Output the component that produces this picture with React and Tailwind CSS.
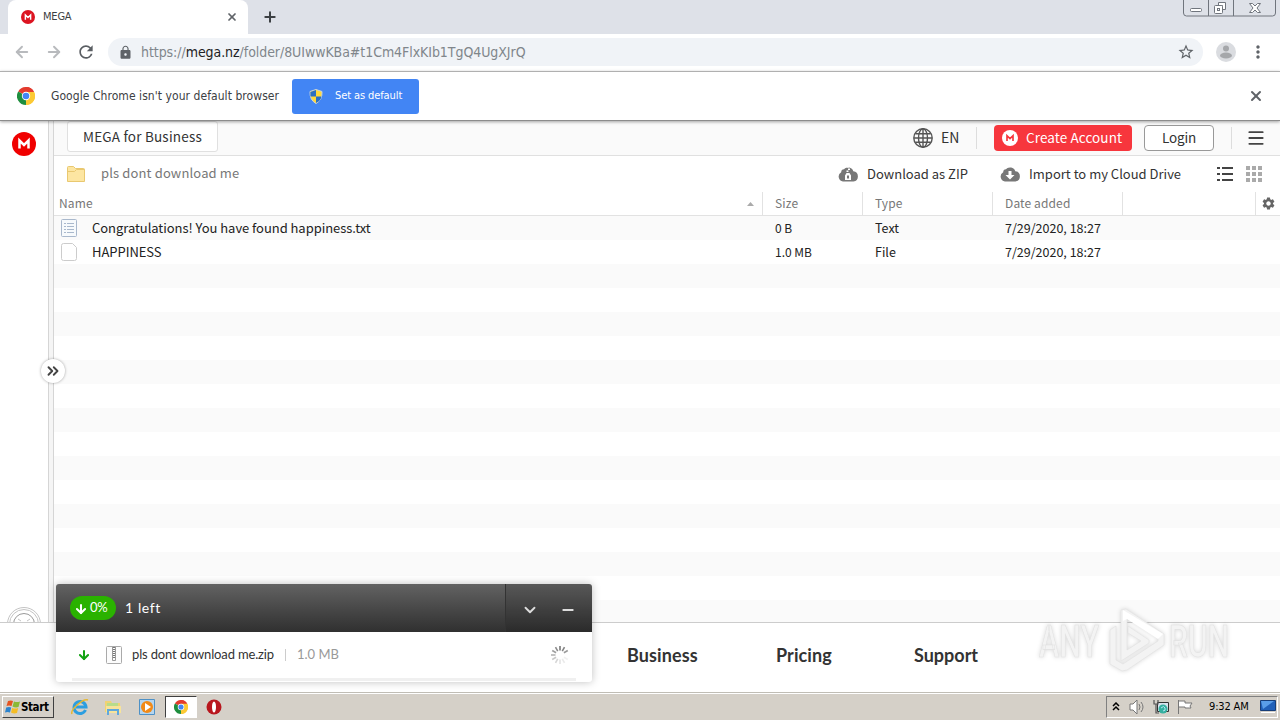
import React from 'react'
import { ArrowDown, ArrowLeft, ArrowRight, ChevronDown, ChevronsRight, Menu, Minus, Plus, X } from 'lucide-react'
import { MdLock, MdMoreVert, MdRefresh, MdSettings, MdStarBorder } from 'react-icons/md'

const files = [
  { name: 'Congratulations! You have found happiness.txt', size: '0 B', type: 'Text', date: '7/29/2020, 18:27' },
  { name: 'HAPPINESS', size: '1.0 MB', type: 'File', date: '7/29/2020, 18:27' },
]

const MegaLogo = ({ className, bg = '#f00000', fg = '#ffffff' }) => (
  <svg className={className} viewBox="0 0 24 24">
    <circle cx="12" cy="12" r="12" fill={bg} />
    <path d="M7.500 16.500v-8l4.500 4.500 4.500-4.500v8" fill="none" stroke={fg} strokeWidth="2.500" />
  </svg>
)

const ChromeLogo = ({ className }) => (
  <svg className={className} viewBox="0 0 24 24">
    <path d="M12 12 1.600 6A12 12 0 0 1 22.400 6Z" fill="#e33b2e" />
    <path d="M12 12 22.400 6A12 12 0 0 1 12 24Z" fill="#fcc934" />
    <path d="M12 12v12A12 12 0 0 1 1.600 6Z" fill="#1e8e3e" />
    <path d="M12 6.500h10.700A12 12 0 0 0 12 0Z" fill="#e33b2e" />
    <path d="M12 6.500h10.700A12 12 0 0 1 12 24l4.800-9.200Z" fill="#fcc934" />
    <circle cx="12" cy="12" r="5.600" fill="#fff" />
    <circle cx="12" cy="12" r="4.400" fill="#4285f4" />
  </svg>
)

const Shield = () => (
  <svg className="h-[15px] w-[14px]" viewBox="0 0 14 15">
    <path d="M7 0.500 13 2.500Q13.500 11 7 14.500 0.500 11 1 2.500Z" fill="#ffd93b" stroke="#c9d4dc" />
    <path d="M7 1v6.500H1.500L1.400 3Z" fill="#2b6fc2" />
    <path d="M7 7.500h5.500Q11.500 12 7 14Z" fill="#2b6fc2" />
  </svg>
)

const WindowButtons = () => (
  <svg className="h-[18px] w-[96px]" viewBox="0 0 96 18" fill="none" stroke="#70757d">
    <path d="M2.500 0v13q0 3 3 3h86q3 0 3-3V0M27.500 0v16M52.500 0v16" />
    <rect x="9.500" y="8.500" width="11" height="3" rx="1" fill="#fff" />
    <path d="M37.500 2.500h7v7h-3v-4h-4z" fill="#fff" />
    <rect x="33.500" y="5.500" width="8" height="8" rx="1" fill="#fff" />
    <rect x="36.500" y="8.500" width="2" height="2" />
    <path d="M68.500 3.500h3l2.500 2.500 2.500-2.500h3l-3.500 4.500 3.500 4.500h-3l-2.500-2.500-2.500 2.500h-3l3.500-4.500z" fill="#fff" />
  </svg>
)

const Globe = () => (
  <svg className="h-5 w-5" viewBox="0 0 20 20" fill="none" stroke="#555" strokeWidth="1.400">
    <circle cx="10" cy="10" r="9.200" />
    <ellipse cx="10" cy="10" rx="4.500" ry="9.200" />
    <path d="M10 1v18M1 10h18M2.500 5.800h15M2.500 14.200h15" />
  </svg>
)

const CloudIcon = ({ zip }) => (
  <svg className="h-4 w-5" viewBox="0 0 20 16">
    <path d="M5 15.500A5 5 0 0 1 3.200 6.200 3 3 0 0 1 6 3.200 5.500 5.500 0 0 1 15.300 5.200a5.200 5.200 0 0 1 .2 10.300z" fill="#777" />
    {zip ? (
      <g>
        <path d="M9 0h2v1.500H9zM10 2.500h2V4h-2zM8.500 4.500h2V6h-2z" fill="#fff" />
        <path d="M7 14V9.500L8.500 7h3L13 9.500V14zM9 9.500v3h2v-3z" fill="#fff" fillRule="evenodd" />
      </g>
    ) : (
      <path d="M8.500 5h3v4h3L10 13.500 5.500 9h3z" fill="#fff" />
    )}
  </svg>
)

const Folder = () => (
  <svg className="h-[18px] w-5" viewBox="0 0 20 18">
    <path d="M1.500 16.500v-14q0-1 1-1h5l2 2h8q1 0 1 1v12z" fill="#fde6a2" stroke="#e9c870" />
    <path d="M1.500 6.500h7l2-2h8" fill="none" stroke="#e9c870" />
  </svg>
)

const FileIcon = ({ type }) => (
  <svg className="h-[18px] w-4" viewBox="0 0 16 18" fill="none">
    {type === 'Text' ? (
      <g stroke="#a9b8cc">
        <rect x="0.500" y="0.500" width="15" height="17" rx="1" fill="#f7fafc" />
        <path d="M3 4.500h2M6 4.500h7M3 7.500h2M6 7.500h7M3 10.500h2M6 10.500h7M3 13.500h2M6 13.500h7" />
      </g>
    ) : (
      <path d="M2.500.5h9l4 4v11q0 2-2 2h-11q-2 0-2-2v-13q0-2 2-2z" fill="#fff" stroke="#ccc" />
    )}
  </svg>
)

const ZipIcon = () => (
  <svg className="h-[18px] w-4" viewBox="0 0 16 18" fill="none" stroke="#aaa">
    <rect x="0.500" y="0.500" width="15" height="17" rx="1" fill="#fcfcfc" />
    <path d="M6.500 1v13.500h3V1" stroke="#999" />
    <path d="M8 1v12" stroke="#777" strokeDasharray="1 1" strokeWidth="2" />
  </svg>
)

const Spinner = () => (
  <svg className="h-5 w-5" viewBox="0 0 20 20">
    {[1, 0.9, 0.75, 0, 0.1, 0.15, 0.2, 0.3, 0.4, 0.55, 0.7, 0.85].map((o, i) => (
      <path key={i} d="M10 1v4.500" stroke="#777" strokeWidth="1.600" opacity={o} transform={`rotate(${i * 30} 10 10)`} />
    ))}
  </svg>
)

const Watermark = () => (
  <svg className="absolute left-[1030px] top-[604px] h-[72px] w-[212px] drop-shadow-[0_0_2px_rgba(0,0,0,0.15)]" viewBox="0 0 212 72">
    <g fill="#f3f3f3" stroke="#e2e2e2" strokeWidth="0.700">
      <text x="9" y="53" fontFamily="Roboto" fontWeight="500" fontSize="45" textLength="60" lengthAdjust="spacingAndGlyphs">ANY</text>
      <text x="139" y="53" fontFamily="Roboto" fontWeight="500" fontSize="45" textLength="60" lengthAdjust="spacingAndGlyphs">RUN</text>
      <path d="M91 6 96 5 134 30v11L97 66l-5 1-12-7V26l6-4v34l7 4 35-23v-3L97 14v32l14-9-13-8v-7l21 14v3L91 57z" />
      <path d="m93 6 40 24-5 5-31-20-4 2z" fill="#fff" stroke="none" />
    </g>
  </svg>
)

const BrowserChrome = () => (
  <div className="relative z-10 h-[121px] shrink-0 bg-white font-['DejaVu_Sans_Condensed',sans-serif]">
    <div className="flex h-[34px] bg-[#dee1e8]">
      <div className="ml-2 flex w-[240px] items-center rounded-t-lg bg-white pl-[13px] pr-[10px]">
        <MegaLogo className="h-[14px] w-[14px]" bg="#dc1421" />
        <span className="ml-2 mt-px text-[11px] tracking-[-0.2px] text-[#3c4043]">MEGA</span>
        <X className="ml-auto h-3 w-3 text-[#5f6368]" strokeWidth={3.5} />
      </div>
      <Plus className="ml-[14px] mt-[9px] h-4 w-4 text-[#3c4043]" strokeWidth={3} />
      <div className="ml-auto mr-[3px]">
        <WindowButtons />
      </div>
    </div>
    <div className="flex h-[37px] items-center pl-[13px] pb-px">
      <ArrowLeft className="h-[18px] w-[18px] text-[#b8babd]" strokeWidth={2.5} />
      <ArrowRight className="ml-[14px] h-[18px] w-[18px] text-[#b8babd]" strokeWidth={2.5} />
      <MdRefresh className="ml-[13px] h-5 w-5 text-[#5a5e63]" />
      <div className="ml-3 flex h-7 w-[1095px] items-center rounded-full bg-[#f0f3f7] pl-[10px] pr-2">
        <MdLock className="h-[15px] w-[15px] text-[#5f6368]" />
        <span className="ml-2 text-[14px] tracking-[-0.06px] text-[#80868b]">
          https://<span className="text-[#202124]">mega.nz</span>/folder/8UIwwKBa#t1Cm4FlxKIb1TgQ4UgXJrQ
        </span>
        <MdStarBorder className="ml-auto h-[18px] w-[18px] text-[#5f6368]" />
      </div>
      <svg className="ml-[13px] h-5 w-5" viewBox="0 0 20 20">
        <circle cx="10" cy="10" r="10" fill="#dadce0" />
        <circle cx="10" cy="6.500" r="3" fill="#a5a7aa" />
        <ellipse cx="10" cy="13.500" rx="6" ry="3" fill="#a5a7aa" />
      </svg>
      <MdMoreVert className="ml-[12px] h-5 w-5 text-[#5f6368]" />
    </div>
    <div className="flex h-[50px] items-center border-y border-t-[#b0b0b0] border-b-[#8c8c8c] pl-[17px] shadow-[0_1px_3px_rgba(0,0,0,0.35)]">
      <ChromeLogo className="h-[18px] w-[18px]" />
      <span className="ml-4 w-[229px] whitespace-nowrap text-[12px] tracking-[0.06px] text-[#3c4043]">Google Chrome isn't your default browser</span>
      <button className="ml-3 flex h-[35px] w-[127px] items-center rounded-[3px] bg-[#4285f4] pl-[17px] text-[11px] tracking-[-0.1px] text-white">
        <Shield />
        <span className="ml-3">Set as default</span>
      </button>
      <X className="ml-auto mr-[16px] h-4 w-4 text-[#5f6368]" strokeWidth={3} />
    </div>
  </div>
)

const Sidebar = () => (
  <div className="flex w-12 shrink-0 flex-col items-center justify-between bg-white pt-[11px]">
    <MegaLogo className="h-6 w-6" />
    <svg className="h-4 w-9" viewBox="0 0 36 16" fill="none" stroke="#c4c4c4">
      <circle cx="18" cy="18" r="16.500" />
      <circle cx="18" cy="18" r="14.500" />
      <circle cx="18" cy="18" r="10.500" stroke="#999" />
      <path d="m12 13 3 2M21 15l3-2" />
    </svg>
  </div>
)

const TopBar = () => (
  <div className="flex h-[35px] items-center border-b border-[#e0e0e0] bg-[#fafafa] text-[14px] text-[#333]">
    <div className="-mt-1 ml-[13px] flex h-[31px] w-[151px] items-center justify-center rounded-[3px] border border-[#e0e0e0] bg-white pt-px text-[13.5px] tracking-[0.2px]">
      MEGA for Business
    </div>
    <div className="ml-auto flex items-center pb-px">
      <Globe />
      <span className="-mt-px ml-2 w-[18px]">EN</span>
      <div className="ml-[17px] h-[22px] w-px bg-[#ddd]" />
      <div className="ml-[17px] flex h-[26px] w-[138px] items-center rounded bg-[#f7363d] pl-2 text-white">
        <MegaLogo className="h-4 w-4" bg="#fff" fg="#f7363d" />
        <span className="-mt-px ml-2 whitespace-nowrap text-[13.5px] tracking-[0.1px]">Create Account</span>
      </div>
      <div className="ml-3 flex h-[26px] w-[70px] items-center justify-center rounded border border-[#999] bg-white pb-px text-[13.5px] tracking-[-0.2px]">Login</div>
      <div className="ml-[17px] h-[22px] w-px bg-[#ddd]" />
      <Menu className="ml-[14px] mr-[14px] h-5 w-5 text-[#444]" strokeWidth={2.2} />
    </div>
  </div>
)

const Toolbar = () => (
  <div className="flex h-[36px] items-center pl-3 text-[13px] text-[#333]">
    <Folder />
    <span className="mb-[3px] ml-[15px] tracking-[0.14px] text-[#777]">pls dont download me</span>
    <div className="ml-auto flex items-center whitespace-nowrap">
      <div className="-mt-px">
        <CloudIcon zip />
      </div>
      <span className="ml-[9px] w-[102px]">Download as ZIP</span>
      <div className="-mt-px ml-[31px]">
        <CloudIcon />
      </div>
      <span className="ml-[9px] w-[154px]">Import to my Cloud Drive</span>
      <svg className="ml-[34px] h-4 w-4" viewBox="0 0 16 16" stroke="#444" strokeWidth="2">
        <path d="M0 2h3M5 2h11M0 8h3M5 8h11M0 14h3M5 14h11" />
      </svg>
      <svg className="ml-[13px] mr-[18px] h-4 w-4" viewBox="0 0 16 16" fill="none" stroke="#aaa" strokeWidth="4" strokeDasharray="4 2">
        <path d="M0 2h16M0 8h16M0 14h16" />
      </svg>
    </div>
  </div>
)

const FileTable = () => (
  <div>
    <div className="flex h-[24px] items-center border-b border-[#e2e2e2] text-[12px] tracking-[0.12px] text-[#777]">
      <div className="flex w-[708px] items-center justify-between pb-px pl-[5px] pr-2">
        Name
        <svg className="mt-[2px] h-1 w-[7px]" viewBox="0 0 7 4">
          <path d="M3.500 0 7 4H0z" fill="#aaa" />
        </svg>
      </div>
      <div className="flex h-full w-[100px] items-center border-l border-[#e2e2e2] pb-px pl-3">Size</div>
      <div className="flex h-full w-[130px] items-center border-l border-[#e2e2e2] pb-px pl-3">Type</div>
      <div className="flex h-full w-[130px] items-center border-l border-[#e2e2e2] pb-px pl-3">Date added</div>
      <div className="h-full w-[133px] border-l border-[#e2e2e2]" />
      <div className="flex h-full flex-1 items-center justify-center border-l border-[#e2e2e2]">
        <MdSettings className="h-[15px] w-[15px] text-[#666]" />
      </div>
    </div>
    {files.map((file) => (
      <div key={file.name} className="flex h-6 items-center text-[13px] text-[#222] odd:bg-white even:bg-[#fafafa]">
        <div className="flex w-[709px] items-center pl-[7px]">
          <FileIcon type={file.type} />
          <span className="ml-[15px] tracking-[-0.05px]">{file.name}</span>
        </div>
        <div className="w-[100px] pl-3 text-[12px]">{file.size}</div>
        <div className="w-[130px] pl-3 text-[12.5px]">{file.type}</div>
        <div className="w-[130px] pl-3 text-[12.5px]">{file.date}</div>
      </div>
    ))}
    {Array.from({ length: 15 }).map((_, i) => (
      <div key={i} className="h-6 odd:bg-white even:bg-[#fafafa]" />
    ))}
  </div>
)

const TransferPanel = () => (
  <div className="absolute left-14 top-[584px] h-[98px] w-[536px] overflow-hidden rounded-[3px] bg-white font-[Lato,sans-serif] shadow-[0_0_8px_rgba(0,0,0,0.25)]">
    <div className="flex h-12 items-center bg-linear-to-b from-[#636363] to-[#303030] pl-[14px] text-[13px] text-white">
      <div className="flex h-6 w-[46px] items-center rounded-full bg-[#2ab200] pl-1">
        <ArrowDown className="mt-[2px] h-[14px] w-[14px]" strokeWidth={3.5} />
        <span className="mb-px ml-[2px] tracking-[-0.2px]">0%</span>
      </div>
      <span className="mb-[2px] ml-[9px] text-[14px] tracking-[0.6px]">1 left</span>
      <div className="ml-auto flex h-full w-[87px] items-center border-l border-[#333] bg-black/10 pl-4 pt-[3px] text-[#ddd]">
        <ChevronDown className="h-[18px] w-[18px] -ml-px" strokeWidth={2.5} />
        <Minus className="ml-[21px] h-4 w-4" strokeWidth={3} />
      </div>
    </div>
    <div className="flex h-[46px] items-center pl-[21px] text-[13px] text-[#333]">
      <ArrowDown className="h-[14px] w-[14px] text-[#12a312]" strokeWidth={3.5} />
      <div className="ml-[15px]">
        <ZipIcon />
      </div>
      <span className="ml-[10px] w-[142px] whitespace-nowrap tracking-[-0.15px]">pls dont download me.zip</span>
      <div className="ml-[11px] h-3 w-px bg-[#ccc]" />
      <span className="ml-[11px] text-[#999]">1.0 MB</span>
      <div className="ml-auto mr-[22px]">
        <Spinner />
      </div>
    </div>
    <div className="mx-4 h-[3px] bg-[#f0f0f0]" />
  </div>
)

const Footer = () => (
  <div className="flex h-[70px] shrink-0 border-t border-[#ccc] bg-white pl-[627px] pt-[19px] font-[Lato,sans-serif] text-[18px] font-bold text-[#333]">
    <span className="w-[149px] tracking-[0.1px]">Business</span>
    <span className="w-[138px] tracking-[0.1px]">Pricing</span>
    <span>Support</span>
  </div>
)

const Taskbar = () => (
  <div className="flex h-7 items-center border-t border-[#c0bdb5] bg-[#d5d0c8] font-['DejaVu_Sans_Condensed',sans-serif] text-[11px] text-black shadow-[inset_0_1px_0_#fff]">
    <div className="ml-[2px] flex h-[22px] w-[52px] items-center border border-b-[#404040] border-l-white border-r-[#404040] border-t-white pl-[2px] font-bold">
      <svg className="h-[14px] w-4 shrink-0" viewBox="0 0 16 14">
        <path d="M3 1q3-1 5 0L6.500 6Q4 5 1.500 6z" fill="#e65420" />
        <path d="M9 1.500q3 1 6 0L13.500 7q-3 1-6-.5z" fill="#8ab936" />
        <path d="M1.200 7.500q3-1 5 0L5 12.500q-2.500-1-5 0z" fill="#2d84ce" />
        <path d="M7.200 8q3 1 6 0L12 13q-3 1-6-.5z" fill="#f5bd25" />
      </svg>
      <span className="mt-[2px] text-[11.5px] tracking-[-0.4px]">Start</span>
    </div>
    <svg className="ml-[17px] h-[18px] w-[18px]" viewBox="0 0 18 18" fill="none">
      <path d="M14.500 12A6 6 0 1 1 15 9H5" stroke="#2c9ee0" strokeWidth="3" />
      <path d="M1 16C-1 12 12 0 17 2" stroke="#e7b82f" strokeWidth="1.500" />
    </svg>
    <svg className="ml-[15px] h-[18px] w-[18px]" viewBox="0 0 18 18">
      <path d="M1 3h6l1 2h8v9H1z" fill="#f0d373" />
      <path d="M3 5h11v4H3z" fill="#b8dc8a" />
      <path d="M2 8h15v7H2z" fill="#f7e39a" />
      <path d="M4 17v-5h10v5" fill="none" stroke="#60a8dc" strokeWidth="2" />
    </svg>
    <svg className="ml-[17px] h-4 w-4" viewBox="0 0 16 16">
      <path d="M.5.5h15v15H.5z" fill="#b5d5ee" stroke="#4e91c6" />
      <circle cx="8" cy="8" r="6" fill="#f28a16" />
      <path d="m6 4 6 4-6 4z" fill="#fff" />
    </svg>
    <div className="ml-[10px] flex h-[22px] w-[32px] items-center justify-center border border-b-white border-l-[#404040] border-r-white border-t-[#404040] bg-white">
      <ChromeLogo className="h-[14px] w-[14px]" />
    </div>
    <svg className="ml-[9px] h-4 w-4" viewBox="0 0 16 16">
      <circle cx="8" cy="8" r="7.500" fill="#b8161d" />
      <ellipse cx="8" cy="8" rx="2" ry="5.500" fill="#fff" />
    </svg>
    <div className="ml-auto mr-[2px] flex h-[22px] w-[172px] items-center border border-b-white border-l-[#808080] border-r-white border-t-[#808080]">
      <svg className="ml-[5px] h-[9px] w-2" viewBox="0 0 8 9" fill="none" stroke="#000" strokeWidth="1.500">
        <path d="m1 4 3-3 3 3M1 8l3-3 3 3" />
      </svg>
      <svg className="ml-[9px] h-4 w-4" viewBox="0 0 16 16" fill="none" stroke="#777">
        <path d="M1 5h3l4-4v14l-4-4H1z" fill="#fff" />
        <path d="M10 5q2 3 0 6M12 3q4 5 0 10" />
      </svg>
      <svg className="ml-2 h-4 w-4" viewBox="0 0 16 16">
        <path d="M4.500 3.500h11v9h-11z" fill="#d8e3ee" stroke="#333" />
        <circle cx="10" cy="10" r="4.500" fill="#35b0a0" />
        <path d="M8 9q3-3 4 0t-2 3" fill="none" stroke="#b5e6f2" />
        <path d="M1 1v4h4V1M3 5v9h3" fill="none" stroke="#555" strokeWidth="1.200" />
      </svg>
      <svg className="ml-2 h-4 w-4" viewBox="0 0 16 16" fill="#fff" stroke="#777">
        <path d="M1.500 1v14M2 2h6v2h7l-2 3 1 2H8V8H2" />
      </svg>
      <span className="ml-4 mt-[2px] w-[41px] whitespace-nowrap tracking-[-0.15px]">9:32 AM</span>
      <svg className="ml-[10px] h-[14px] w-4 shrink-0" viewBox="0 0 16 14">
        <path d="M.5.5h15v10H.5z" fill="#2160b8" stroke="#173e78" />
        <path d="M1 1h13L3 9z" fill="#5a9ee8" />
        <path d="M1 12.500h14" stroke="#fff" />
      </svg>
    </div>
  </div>
)

export default function App() {
  return (
    <div className="relative flex h-[720px] w-[1280px] flex-col overflow-hidden bg-white font-['Noto_Sans_CJK_SC',sans-serif]">
      <BrowserChrome />
      <div className="flex h-[501px] shrink-0 overflow-hidden">
        <Sidebar />
        <div className="w-[6px] shrink-0 border-x border-[#d5d5d5] bg-[#f5f5f5]" />
        <div className="min-w-0 flex-1">
          <TopBar />
          <Toolbar />
          <FileTable />
        </div>
      </div>
      <Footer />
      <Taskbar />
      <div className="absolute left-[41px] top-[359px] flex h-6 w-6 items-center justify-center rounded-full bg-white shadow-[0_0_3px_rgba(0,0,0,0.35)]">
        <ChevronsRight className="h-[18px] w-[18px] text-[#444]" strokeWidth={2.5} />
      </div>
      <TransferPanel />
      <Watermark />
    </div>
  )
}
